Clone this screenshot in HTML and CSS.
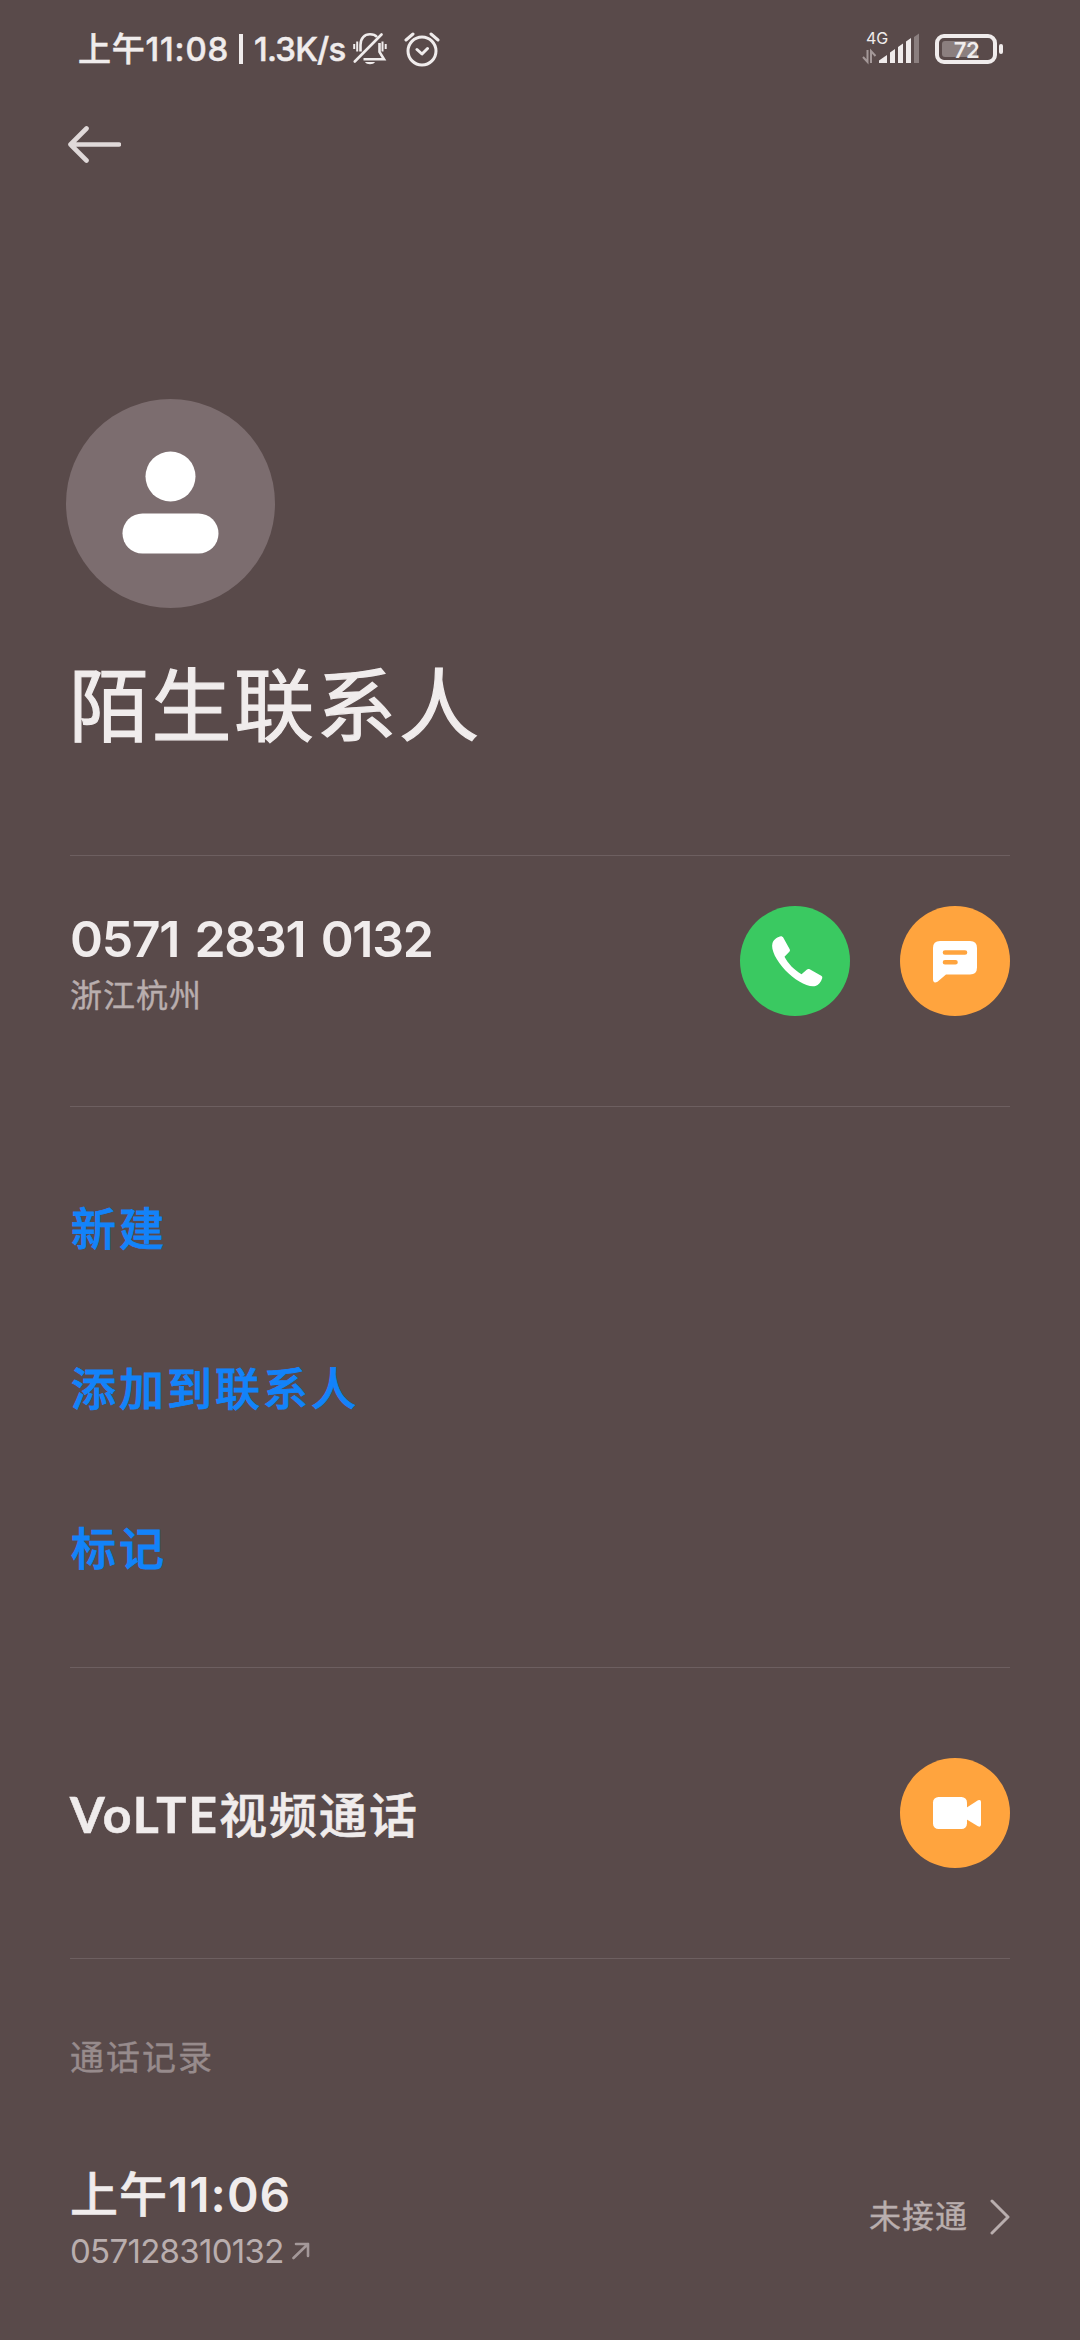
FILE: index.html
```html
<!DOCTYPE html>
<html lang="zh-CN">
<head>
    <meta charset="UTF-8">
    <meta name="viewport" content="width=device-width, initial-scale=1.0">
    <title>陌生联系人</title>
    <link rel="stylesheet" href="styles.css">
</head>
<body>

    <div class="status-bar">
        <div class="status-left">
            <span class="clock">上午<span class="clock-num">11:08</span></span>
            <span class="bar"></span>
            <span class="speed">1.3K/s</span>
            <svg class="mute" width="34" height="34" viewBox="0 0 34 34" fill="none" stroke="#f0ecec" stroke-width="2.6">
                <path d="M7.500 19.500V13C7.500 6 11.500 2.300 17 2.300C20 2.300 22.500 3.300 24 5"/>
                <path d="M26.500 11V20L31 27.300H10.500"/>
                <path d="M1.800 29.500L28.500 2.500" stroke-linecap="round"/>
                <path d="M1.200 12V17M4.200 9.500V19.500M29.500 9.500V19.500M32.700 12V17" stroke-width="2"/>
                <path d="M12 30H22C20.500 33 13.500 33 12 30Z" fill="#f0ecec" stroke="none"/>
            </svg>
            <svg width="36" height="36" viewBox="0 0 36 36" fill="none" stroke="#f0ecec" stroke-width="3" stroke-linecap="round" stroke-linejoin="round">
                <circle cx="18" cy="20" r="14"/>
                <path d="M13 18.500L18 23L23.500 17.500M2 9L9 3M27 3L34 9"/>
            </svg>
        </div>
        <div class="status-right">
            <svg width="58" height="46" viewBox="0 -6 58 46" fill="#f0ecec">
                <text class="net" x="4" y="12">4G</text>
                <path d="M1 25L5.500 30V18M9 31V19L13.500 24" fill="none" stroke="#a49898" stroke-width="2"/>
                <path d="M17 31V28.500L25 23V31Z"/>
                <path d="M28 31V20.500L33 17V31ZM36 31V15L41 11.500V31ZM44 31V9.500L49 6V31Z"/>
                <path d="M52 31V5L57 1.500V31Z" fill="#8b7f7f"/>
            </svg>
            <svg width="69" height="30" viewBox="0 0 69 30">
                <rect x="2" y="2" width="58" height="26" rx="7" fill="none" stroke="#f0ecec" stroke-width="4"/>
                <rect x="7" y="7" width="35" height="16" rx="3" fill="#8b7f7f"/>
                <rect x="64" y="10" width="4" height="10" rx="2" fill="#f0ecec"/>
                <text class="level" x="31.500" y="23.500" text-anchor="middle">72</text>
            </svg>
        </div>
    </div>

    <div class="toolbar">
        <svg width="54" height="38" viewBox="0 0 54 38" fill="none" stroke="#e0d9d9" stroke-width="4.600" stroke-linecap="round" stroke-linejoin="round">
            <path d="M19.500 2.500L3.500 18.500L19.500 34.500M3.500 18.500H52"/>
        </svg>
    </div>

    <div class="profile">
        <svg class="avatar" width="209" height="209" viewBox="0 0 209 209">
            <circle cx="104.500" cy="104.500" r="104.500" fill="#7c6d6f"/>
            <circle cx="104.500" cy="77.500" r="25" fill="#fff"/>
            <rect x="56.500" y="114.500" width="96" height="40" rx="20" fill="#fff"/>
        </svg>
        <h1>陌生联系人</h1>
    </div>

    <div class="section phone">
        <div class="info">
            <div class="number">0571 2831 0132</div>
            <div class="place">浙江杭州</div>
        </div>
        <div class="buttons">
            <button class="round green">
                <svg width="110" height="110" viewBox="0 0 110 110" fill="#fff">
                    <path d="M32.500 37C34 33 38 30.500 41 30.200C42 30.200 42.700 30.800 43.200 31.600L49.700 43.200C50.200 44.200 50 45 49.300 45.700L44.500 50.800C48 57.500 54 64 61.500 68.200L67 63.500C67.800 62.800 68.800 62.800 69.700 63.300L81.200 69.700C82.200 70.300 82.500 71.200 82.200 72.200C81 76 78.500 79 75.500 80C68 82 54.500 74 45.500 64.500C36.500 55 30.500 43.500 32.500 37Z"/>
                </svg>
            </button>
            <button class="round orange">
                <svg width="110" height="110" viewBox="0 0 110 110">
                    <path d="M40 35H70Q77 35 77 42V61.500Q77 68.500 70 68.500H46L37.500 75.800Q33 78 33 73V42Q33 35 40 35Z" fill="#fff"/>
                    <path d="M45 46.500H65M45 56.200H55.500" stroke="#ffa43e" stroke-width="4.600" stroke-linecap="round"/>
                </svg>
            </button>
        </div>
    </div>

    <div class="section links">
        <a>新建</a>
        <a>添加到联系人</a>
        <a>标记</a>
    </div>

    <div class="section volte">
        <div class="volte-title"><span class="latin">VoLTE</span>视频通话</div>
        <button class="round orange">
            <svg width="110" height="110" viewBox="0 0 110 110" fill="#fff">
                <rect x="33" y="39" width="34" height="32" rx="5.500"/>
                <path d="M66 50L78 42.300Q81 41 81 44V66.500Q81 69.500 78 68.300L66 61Z"/>
            </svg>
        </button>
    </div>

    <div class="section history">
        <h2>通话记录</h2>
        <div class="call">
            <div>
                <div class="call-time">上午<span class="call-num">11:06</span></div>
                <div class="call-number">057128310132
                    <svg width="18" height="18" viewBox="0 0 18 18" fill="none" stroke="#a49899" stroke-width="2.600" stroke-linecap="round" stroke-linejoin="round">
                        <path d="M1.500 16L16 2M4 2H16V14"/>
                    </svg>
                </div>
            </div>
            <div class="call-state">未接通
                <svg width="20" height="36" viewBox="0 0 20 36" fill="none" stroke="#b9aeae" stroke-width="3" stroke-linecap="round" stroke-linejoin="round">
                    <path d="M2 2L18 18L2 34"/>
                </svg>
            </div>
        </div>
    </div>

</body>
</html>
```

FILE: styles.css
```css
* {
    margin: 0;
    padding: 0;
    box-sizing: border-box;
}

body {
    width: 1080px;
    height: 2340px;
    overflow: hidden;
    background-color: #594a4a;
    color: #f0ecec;
    font-family: Inter, "Noto Sans CJK SC", sans-serif;
}

svg {
    display: block;
}

.status-bar {
    height: 98px;
    padding: 0 76px 0 78px;
    display: flex;
    justify-content: space-between;
    align-items: center;
}

.status-left {
    display: flex;
    align-items: center;
    font-size: 33px;
    font-weight: 500;
    line-height: 40px;
}

.clock {
    width: 150px;
    letter-spacing: 0.8px;
    white-space: nowrap;
    -webkit-text-stroke: 0.5px;
}

.bar {
    width: 4px;
    height: 30px;
    margin: 0 11px 0 11px;
    background-color: #f0ecec;
}

.speed {
    width: 99px;
    letter-spacing: -0.8px;
    white-space: nowrap;
    -webkit-text-stroke: 0.5px;
}

.mute {
    margin-right: 17px;
}

.status-right {
    display: flex;
    align-items: center;
    gap: 15px;
}

.net {
    font-size: 16px;
}

.level {
    font-size: 22px;
    font-weight: 600;
    letter-spacing: -0.5px;
    fill: #f0ecec;
}

.toolbar {
    height: 94px;
    padding: 28px 67px;
}

.profile {
    height: 663px;
    padding: 207px 66px 0;
}

.profile h1 {
    margin: 48px 0 0 3px;
    font-size: 80px;
    font-weight: 400;
    line-height: 100px;
    letter-spacing: 2.500px;
    -webkit-text-stroke: 1.200px;
}

.section {
    margin: 0 70px;
    border-top: 1px solid #6d5f60;
}

.phone {
    height: 251px;
    padding-top: 50px;
    display: flex;
    justify-content: space-between;
}

.number {
    margin-top: 3px;
    font-size: 50px;
    font-weight: 600;
    line-height: 60px;
    letter-spacing: -1.300px;
    word-spacing: 4px;
}

.place {
    color: #b9aeae;
    font-size: 32px;
    line-height: 54px;
    letter-spacing: 1px;
    -webkit-text-stroke: 0.4px;
}

.buttons {
    display: flex;
    gap: 50px;
}

.round {
    width: 110px;
    height: 110px;
    border: none;
    border-radius: 50%;
}

.green {
    background-color: #3ac961;
}

.orange {
    background-color: #ffa43e;
}

.links {
    height: 561px;
    padding-top: 43px;
}

.links a {
    display: block;
    margin-left: 1px;
    color: #1283fa;
    font-size: 45px;
    font-weight: 500;
    line-height: 160px;
    letter-spacing: 3px;
    -webkit-text-stroke: 0.8px;
}

.volte {
    height: 291px;
    display: flex;
    justify-content: space-between;
    align-items: center;
}

.volte-title {
    margin-top: -3px;
    font-size: 48px;
    font-weight: 500;
    letter-spacing: 2px;
    -webkit-text-stroke: 0.6px;
}

.latin {
    font-family: Lato, sans-serif;
    font-size: 50px;
    font-weight: 700;
}

.history {
    padding-top: 69px;
}

.history h2 {
    color: #978b8c;
    font-size: 34px;
    font-weight: 400;
    line-height: 60px;
    letter-spacing: 2px;
    -webkit-text-stroke: 0.4px;
}

.call {
    margin-top: 77px;
    display: flex;
    justify-content: space-between;
    align-items: flex-start;
}

.call-time {
    font-size: 48px;
    font-weight: 500;
    line-height: 60px;
    letter-spacing: 1px;
    -webkit-text-stroke: 0.6px;
}

.call-num {
    font-weight: 600;
    -webkit-text-stroke: 0;
}

.call-number {
    display: flex;
    align-items: center;
    gap: 8px;
    color: #b9aeae;
    font-size: 33px;
    line-height: 52px;
    letter-spacing: -0.7px;
}

.call-state {
    margin-top: 27px;
    display: flex;
    align-items: center;
    gap: 22px;
    color: #b9aeae;
    font-size: 32px;
    line-height: 50px;
    letter-spacing: 1px;
    -webkit-text-stroke: 0.4px;
}
```
